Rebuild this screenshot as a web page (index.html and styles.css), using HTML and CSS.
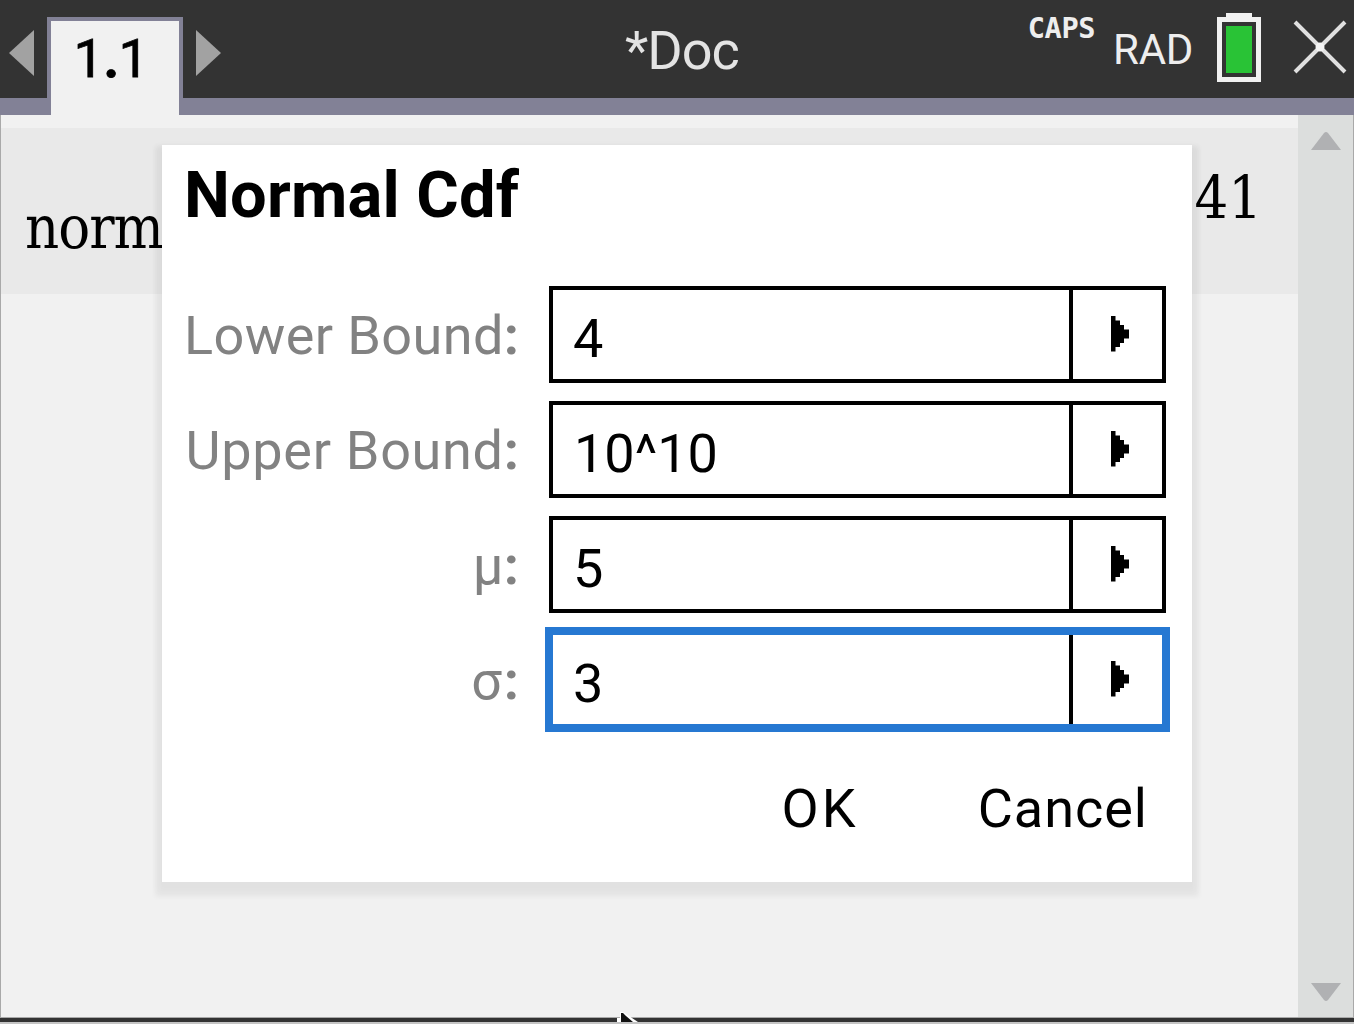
FILE: index.html
```html
<!DOCTYPE html>
<html lang="en">
<head>
<meta charset="utf-8">
<title>Normal Cdf</title>
<link rel="stylesheet" href="styles.css">
</head>
<body>
<div class="screen">
  <header class="topbar">
    <nav class="tabs">
      <svg class="tab-arrow" width="28" height="50" viewBox="0 0 28 50"><path d="M1 25 26 2V48Z"/></svg>
      <div class="tab"><span class="tab-text">1<b>.</b>1</span></div>
      <svg class="tab-arrow" width="28" height="50" viewBox="0 0 28 50"><path d="M27 25 2 2V48Z"/></svg>
    </nav>
    <div class="doc"><span class="doc-text">*Doc</span></div>
    <div class="status">
      <span class="caps">CAPS</span>
      <span class="rad">RAD</span>
      <svg class="battery" width="44" height="69" viewBox="0 0 44 69"><path fill="#f1f1f1" d="M9 0H35V4H44V69H0V4H9Z"/><path fill="#333" d="M5 9H39V64H5Z"/><path fill="#29c336" d="M9 13H35V60H9Z"/></svg>
      <svg class="close" width="54" height="54" viewBox="0 0 54 54"><path d="M2 2 52 52M52 2 2 52" stroke="#e0e0e0" stroke-width="4"/><circle cx="27" cy="27" r="4.5" fill="#f4f4f4"/></svg>
    </div>
  </header>
  <main class="page">
    <div class="work">
      <div class="entry"><span class="expr">norm</span><span class="result">41</span></div>
    </div>
    <div class="scrollbar">
      <svg width="30" height="18" viewBox="0 0 30 18"><path d="M0 18 13 1Q15-1 17 1L30 18Z"/></svg>
      <svg width="30" height="18" viewBox="0 0 30 18"><path d="M0 0 13 17Q15 19 17 17L30 0Z"/></svg>
    </div>
    <section class="dialog">
      <h1 class="title"><span class="title-text">Normal Cdf</span></h1>
      <div class="fields">
        <span class="label">Lower Bound<b>:</b></span>
        <div class="field"><span class="value">4</span><span class="more"><svg width="18" height="36" viewBox="0 0 18 36"><path d="M0 0H4.5V4.5H9V9H13V13.5H18V22.5H13V27H9V31H4.5V35.5H0Z"/></svg></span></div>
        <span class="label upper">Upper Bound<b>:</b></span>
        <div class="field"><span class="value wide">10^10</span><span class="more"><svg width="18" height="36" viewBox="0 0 18 36"><path d="M0 0H4.5V4.5H9V9H13V13.5H18V22.5H13V27H9V31H4.5V35.5H0Z"/></svg></span></div>
        <span class="label">μ<b>:</b></span>
        <div class="field"><span class="value">5</span><span class="more"><svg width="18" height="36" viewBox="0 0 18 36"><path d="M0 0H4.5V4.5H9V9H13V13.5H18V22.5H13V27H9V31H4.5V35.5H0Z"/></svg></span></div>
        <span class="label sigma">σ<b>:</b></span>
        <div class="field focused"><span class="value">3</span><span class="more"><svg width="18" height="36" viewBox="0 0 18 36"><path d="M0 0H4.5V4.5H9V9H13V13.5H18V22.5H13V27H9V31H4.5V35.5H0Z"/></svg></span></div>
      </div>
      <div class="actions"><span class="ok">OK</span><span class="cancel">Cancel</span></div>
    </section>
  </main>
  <footer class="edge"></footer>
  <svg class="cursor" width="24" height="12" viewBox="0 0 24 12"><path fill="#fff" d="M0 10V6H3V0H6L21 10Z"/><path fill="#111" d="M4 10V1H6L9 4 16 10Z"/></svg>
</div>
</body>
</html>
```
FILE: styles.css
```css
* { box-sizing: border-box; }
body { margin: 0; font-family: Roboto, "Liberation Sans", sans-serif; }
svg { display: block; flex: none; }
span { white-space: nowrap; }
.screen { position: relative; display: flex; flex-direction: column; width: 1354px; height: 1024px; overflow: hidden; background: #f1f1f1; }

.topbar { display: flex; justify-content: space-between; height: 115px; background: #333; border-bottom: 17px solid #828196; }
.tabs { display: flex; padding-left: 8px; }
.tab-arrow { margin-top: 28px; fill: #a2a2a2; }
.tab { width: 136px; height: 98px; margin: 17px 11px 0; border: 4px solid #828196; border-bottom: 0; background: #f1f1f1; text-align: center; font-size: 54px; line-height: 75px; }
.tab-text { margin-right: 8px; letter-spacing: -.5px; -webkit-text-stroke: .8px #000; }
.doc { flex: 1; padding-left: 403px; color: #e4e4e4; font-size: 54px; line-height: 101px; }
.doc-text { letter-spacing: -1px; }
.status { display: flex; align-items: flex-start; color: #eee; padding-right: 7px; }
.caps { font: bold 28.6px/34px "DejaVu Sans Mono", monospace; letter-spacing: -.4px; margin: 11px 18px 0 0; }
.rad { font-size: 42px; line-height: 50px; margin: 25px 24px 0 0; letter-spacing: -.3px; }
.battery { margin: 13px 32px 0 0; }
.close { margin-top: 20px; }

.page { position: relative; display: flex; height: 903px; border: 1px solid #a9a9a9; border-top: 0; }
.work { width: 1297px; padding-top: 13px; }
.entry { display: flex; justify-content: space-between; height: 166px; padding: 0 36px 0 24px; background: #e9e9e9; font-family: "DejaVu Serif Condensed", "DejaVu Serif", serif; font-stretch: condensed; font-size: 59px; line-height: 76px; }
.expr { padding-top: 62px; letter-spacing: -1px; }
.result { padding-top: 33px; }
.scrollbar { flex: 1; display: flex; flex-direction: column; align-items: center; justify-content: space-between; padding: 17px 0 16px; background: #dcdedd; fill: #b0b1b3; }

.dialog { position: absolute; left: 161px; top: 30px; width: 1030px; height: 737px; padding: 0 26px 0 24px; background: #fff; box-shadow: 0 8px 5px 7px rgba(0,0,0,.045), 0 5px 8px 5px rgba(0,0,0,.025); }
.title { height: 141px; margin: 0 0 0 -2px; font-size: 65px; line-height: 101px; font-weight: 700; }
.title-text { letter-spacing: .2px; }
.fields { display: grid; grid-template-columns: 333px 617px; grid-auto-rows: 97px; row-gap: 18px; column-gap: 30px; }
.label { justify-self: end; color: #828282; font-size: 54px; line-height: 99px; letter-spacing: .4px; }
.label b { font-weight: 700; letter-spacing: 0; }
.upper { letter-spacing: .7px; }
.sigma { letter-spacing: 2px; }
.field { display: flex; border: 4px solid #000; }
.focused { border-color: #2678d2; box-shadow: 0 0 0 4px #2678d2; }
.value { flex: 1; padding: 2px 0 0 20px; font-size: 54px; line-height: 94px; }
.wide { padding-left: 21px; }
.more { width: 93px; border-left: 4px solid #000; padding: 26px 0 0 38px; }
.actions { display: flex; justify-content: flex-end; padding: 36px 18px 0 0; font-size: 54px; line-height: 90px; }
.ok { margin-right: 119px; letter-spacing: 3px; }
.cancel { letter-spacing: 1px; }

.edge { height: 6px; background: #333; border-bottom: 2px solid #c4c4c4; }
.cursor { position: absolute; left: 617px; top: 1012px; }
```
